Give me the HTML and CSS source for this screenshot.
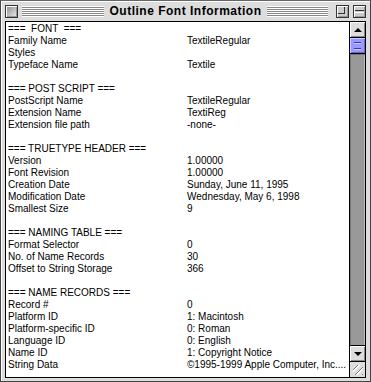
FILE: index.html
```html
<!DOCTYPE html>
<html lang="en">

<head>
	<meta charset="utf-8">
	<title>Outline Font Information</title>
	<link rel="stylesheet" href="styles.css">
</head>

<body>
	<div class="window">
		<div class="titlebar">
			<div class="side">
				<span class="box close-box"></span>
				<span class="stripes"></span>
			</div>
			<span class="title">Outline Font Information</span>
			<div class="side">
				<span class="stripes"></span>
				<span class="box zoom-box"><span class="zoom-inner"></span></span>
				<span class="box collapse-box"><span class="collapse-inner"></span></span>
			</div>
		</div>
		<div class="frame">
			<div class="info">
				<div class="section">
					<div class="head">===  FONT  ===</div>
					<div>Family Name</div><div>TextileRegular</div>
					<div>Styles</div><div></div>
					<div>Typeface Name</div><div>Textile</div>
				</div>
				<div class="section">
					<div class="head">=== POST SCRIPT ===</div>
					<div>PostScript Name</div><div>TextileRegular</div>
					<div>Extension Name</div><div>TextiReg</div>
					<div>Extension file path</div><div>-none-</div>
				</div>
				<div class="section">
					<div class="head">=== TRUETYPE HEADER ===</div>
					<div>Version</div><div>1.00000</div>
					<div>Font Revision</div><div>1.00000</div>
					<div>Creation Date</div><div>Sunday, June 11, 1995</div>
					<div>Modification Date</div><div>Wednesday, May 6, 1998</div>
					<div>Smallest Size</div><div>9</div>
				</div>
				<div class="section">
					<div class="head">=== NAMING TABLE ===</div>
					<div>Format Selector</div><div>0</div>
					<div>No. of Name Records</div><div>30</div>
					<div>Offset to String Storage</div><div>366</div>
				</div>
				<div class="section">
					<div class="head">=== NAME RECORDS ===</div>
					<div>Record #</div><div>0</div>
					<div>Platform ID</div><div>1: Macintosh</div>
					<div>Platform-specific ID</div><div>0: Roman</div>
					<div>Language ID</div><div>0: English</div>
					<div>Name ID</div><div>1: Copyright Notice</div>
					<div>String Data</div><div class="clip">©1995-1999 Apple Computer, Inc....</div>
				</div>
			</div>
			<div class="scrollbar">
				<div class="arrow up"><span class="tri-up"></span></div>
				<div class="thumb"></div>
				<div class="track"></div>
				<div class="arrow down"><span class="tri-down"></span></div>
				<div class="grow"></div>
			</div>
		</div>
	</div>
</body>

</html>
```

FILE: styles.css
```css
body {
	margin: 0;
	background-color: #ddd;
	font-family: "Liberation Sans", Arial, sans-serif;
}
.window {
	width: 371px;
	height: 382px;
	box-sizing: border-box;
	border: 1px solid #444;
	border-top-color: #666;
	background-color: #ddd;
	display: flex;
	flex-direction: column;
	padding: 0 4px 3px 4px;
	box-shadow: inset 1px 1px 0 #fff;
}
.titlebar {
	height: 20px;
	display: grid;
	grid-template-columns: 1fr auto 1fr;
	align-items: center;
	gap: 4px;
}
.side {
	display: flex;
	align-items: center;
	gap: 4px;
}
.box {
	width: 11px;
	height: 11px;
	border: 1px solid #333;
	background: linear-gradient(135deg, #888, #eee);
	box-shadow: inset 1px 1px 0 #fff, inset -1px -1px 0 #999;
	flex-shrink: 0;
	position: relative;
}
.zoom-box, .collapse-box {
	background: #ccc;
}
.zoom-box {
	margin-left: 4px;
}
.zoom-inner {
	position: absolute;
	left: 1px;
	top: 1px;
	width: 6px;
	height: 6px;
	border-right: 1px solid #333;
	border-bottom: 1px solid #333;
}
.collapse-inner {
	position: absolute;
	left: 1px;
	right: 1px;
	top: 4px;
	height: 1px;
	border-top: 1px solid #333;
	border-bottom: 1px solid #fff;
}
.stripes {
	flex: 1;
	height: 11px;
	background: repeating-linear-gradient(to bottom, #fff 0 1px, #888 1px 2px);
}
.title {
	font-weight: bold;
	font-size: 12px;
	color: #000;
	white-space: nowrap;
	padding: 0 2px;
	letter-spacing: 0.5px;
}
.frame {
	flex: 1;
	display: flex;
	border: 1px solid #000;
	background-color: #fff;
	min-height: 0;
}
.info {
	flex: 1;
	padding: 1px 0 0 2px;
	font-size: 10px;
	line-height: 12px;
	color: #000;
	overflow: hidden;
}
.section {
	display: grid;
	grid-template-columns: 179px 1fr;
	margin-bottom: 12px;
}
.head {
	grid-column: 1 / 3;
	white-space: pre;
}
.clip {
	white-space: nowrap;
	overflow: hidden;
}
.scrollbar {
	width: 15px;
	border-left: 1px solid #000;
	display: flex;
	flex-direction: column;
	background-color: #999;
}
.arrow {
	height: 15px;
	background-color: #ddd;
	box-shadow: inset 1px 1px 0 #fff, inset -1px -1px 0 #888;
	display: flex;
	align-items: center;
	justify-content: center;
}
.arrow.up {
	border-bottom: 1px solid #000;
}
.arrow.down {
	border-top: 1px solid #000;
	border-bottom: 1px solid #000;
}
.tri-up {
	border-left: 4px solid transparent;
	border-right: 4px solid transparent;
	border-bottom: 4px solid #000;
}
.tri-down {
	border-left: 4px solid transparent;
	border-right: 4px solid transparent;
	border-top: 4px solid #000;
}
.thumb {
	height: 15px;
	border-bottom: 1px solid #000;
	background: #99f repeating-linear-gradient(to bottom, transparent 0 4px, #33c 4px 5px, #ccf 5px 6px) 4px 0 / 7px 15px no-repeat;
	box-shadow: inset 1px 1px 0 #ccf, inset -1px -1px 0 #66c;
}
.track {
	flex: 1;
	box-shadow: inset 1px 1px 0 #777, inset -1px 0 0 #bbb;
}
.grow {
	height: 15px;
	background: #ddd repeating-linear-gradient(135deg, transparent 0 3px, #777 3px 4px, #fff 4px 5px) 3px 3px / 10px 10px no-repeat;
}
```
